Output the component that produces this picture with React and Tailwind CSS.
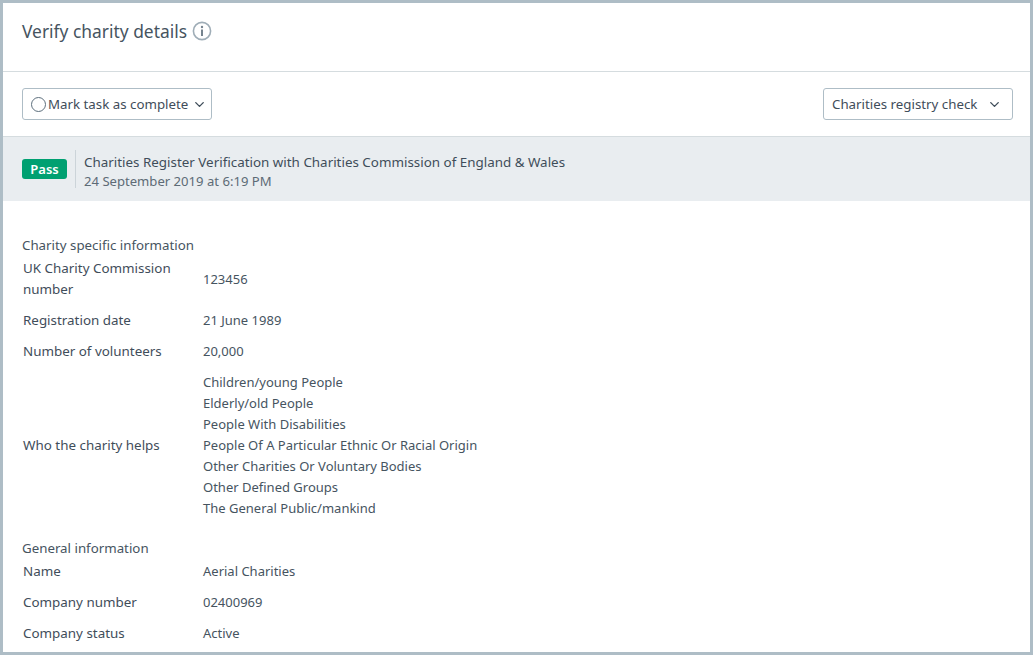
import React from "react";
import { ChevronDown } from "lucide-react";

const charityRows = [
  { label: "UK Charity Commission number", values: ["123456"] },
  { label: "Registration date", values: ["21 June 1989"] },
  { label: "Number of volunteers", values: ["20,000"] },
  {
    label: "Who the charity helps",
    values: [
      "Children/young People",
      "Elderly/old People",
      "People With Disabilities",
      "People Of A Particular Ethnic Or Racial Origin",
      "Other Charities Or Voluntary Bodies",
      "Other Defined Groups",
      "The General Public/mankind",
    ],
  },
];

const generalRows = [
  { label: "Name", values: ["Aerial Charities"] },
  { label: "Company number", values: ["02400969"] },
  { label: "Company status", values: ["Active"] },
];

function Rows({ rows }) {
  return rows.map((row) => (
    <div key={row.label} className="flex items-center py-[5px] pl-5">
      <div className="w-[180px] pr-4 text-[13.4px] text-[#3f4d5a]">{row.label}</div>
      <div className="text-[13px]">
        {row.values.map((v) => (
          <div key={v}>{v}</div>
        ))}
      </div>
    </div>
  ));
}

export default function App() {
  return (
    <div className="h-[655px] overflow-hidden border-[3px] border-[#aebdc6] bg-white font-['Noto_Sans',sans-serif] text-[13.3px] leading-[21px] text-[#46545f]">
      <div className="flex h-[69px] items-start gap-[5px] border-b border-[#d5dcdf] pl-[19px] pr-[17px] pt-[16px]">
        <h1 className="text-[17.4px] leading-6 text-[#46545f]">Verify charity details</h1>
        <svg width="20" height="20" viewBox="0 0 20 20" className="mt-[2px]" fill="none">
          <circle cx="10" cy="10" r="8.6" stroke="#9fadb7" strokeWidth="1.6" />
          <circle cx="10" cy="6" r="1.2" fill="#76848f" />
          <rect x="9" y="8.5" width="2" height="6.5" fill="#76848f" />
        </svg>
      </div>

      <div className="flex h-[65px] items-center justify-between border-b border-[#d5dcdf] pl-[19px] pr-[17px]">
        <button className="flex h-8 w-[190px] items-center rounded-[3px] border border-[#aebdc6] pl-2 text-[#3f4d5a]">
          <span className="mr-[2px] h-[15px] w-[15px] rounded-full border border-[#5d6f7d]" />
          <span className="whitespace-nowrap">Mark task as complete</span>
          <ChevronDown size={15} strokeWidth={2.2} className="ml-[4px]" />
        </button>
        <button className="flex h-8 w-[190px] items-center justify-between rounded-[3px] border border-[#aebdc6] pl-2 pr-[10px] text-[#3f4d5a]">
          <span className="whitespace-nowrap">Charities registry check</span>
          <ChevronDown size={15} strokeWidth={2.2} />
        </button>
      </div>

      <div className="flex h-[64px] items-center bg-[#e9edf0] pl-[19px] pr-[17px]">
        <span className="flex h-5 w-[45px] items-center justify-center rounded-[3px] bg-[#00a071] text-[13px] font-semibold text-white">
          Pass
        </span>
        <div className="ml-2 h-[38px] border-l border-[#ccd4d9] pl-2 pt-[3px]">
          <div className="text-[13.4px] leading-[19px] text-[#3f4d5a]">
            Charities Register Verification with Charities Commission of England &amp; Wales
          </div>
          <div className="text-[13.1px] leading-[19px] text-[#5d6b76]">24 September 2019 at 6:19 PM</div>
        </div>
      </div>

      <div className="pt-[36px]">
        <h2 className="pl-[19px] leading-[16px]">Charity specific information</h2>
        <Rows rows={charityRows} />
        <h2 className="mt-[16px] pl-[19px] leading-[16px]">General information</h2>
        <Rows rows={generalRows} />
      </div>
    </div>
  );
}
